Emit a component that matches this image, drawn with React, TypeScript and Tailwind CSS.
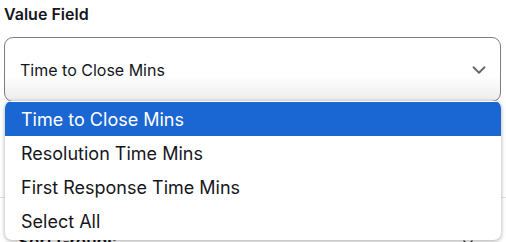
import React from 'react';
import { ChevronDown } from 'lucide-react';

const options = ['Time to Close Mins', 'Resolution Time Mins', 'First Response Time Mins', 'Select All'];

export default function App() {
  return (
    <div className="relative w-[506px] h-[242px] overflow-hidden bg-white font-['Inter',sans-serif] text-[#111]">
      <div className="px-[4px] pt-[4px]">
        <label className="block text-[16px] leading-[20px] font-semibold text-[#16161d]">Value Field</label>
        <div className="mt-[13px] h-[65px] w-[497px] flex items-center justify-between pl-[15px] pr-[10px] border border-[#7d7d7d] rounded-[9px] bg-gradient-to-b from-white from-60% to-[#ececec]">
          <span className="text-[16px] text-[#16161d]">Time to Close Mins</span>
          <ChevronDown className="w-[22px] h-[22px] text-[#666]" strokeWidth={2} />
        </div>
      </div>

      {/* section underneath, mostly hidden by the open list */}
      <div className="mt-[95px] border-t border-[#e3e3e3]">
        <div className="flex items-center justify-between pl-[18px] pr-[30px] pt-[32px]">
          <span className="text-[17px] font-semibold">Sort Groups</span>
          <ChevronDown className="w-[16px] h-[16px] text-[#333]" />
        </div>
      </div>

      <ul className="absolute left-[5px] top-[101px] w-[496px] h-[139px] pt-[1px] rounded-[7px] bg-white overflow-hidden shadow-[0_1px_4px_rgba(0,0,0,0.35)]">
        {options.map((o, i) => (
          <li
            key={o}
            className={
              i === 0
                ? 'h-[34px] flex items-center px-[16px] text-[18px] bg-[#1a66d2] text-white'
                : 'h-[34px] flex items-center px-[16px] text-[18px] text-[#16161d]'
            }
          >
            {o}
          </li>
        ))}
      </ul>
    </div>
  );
}
